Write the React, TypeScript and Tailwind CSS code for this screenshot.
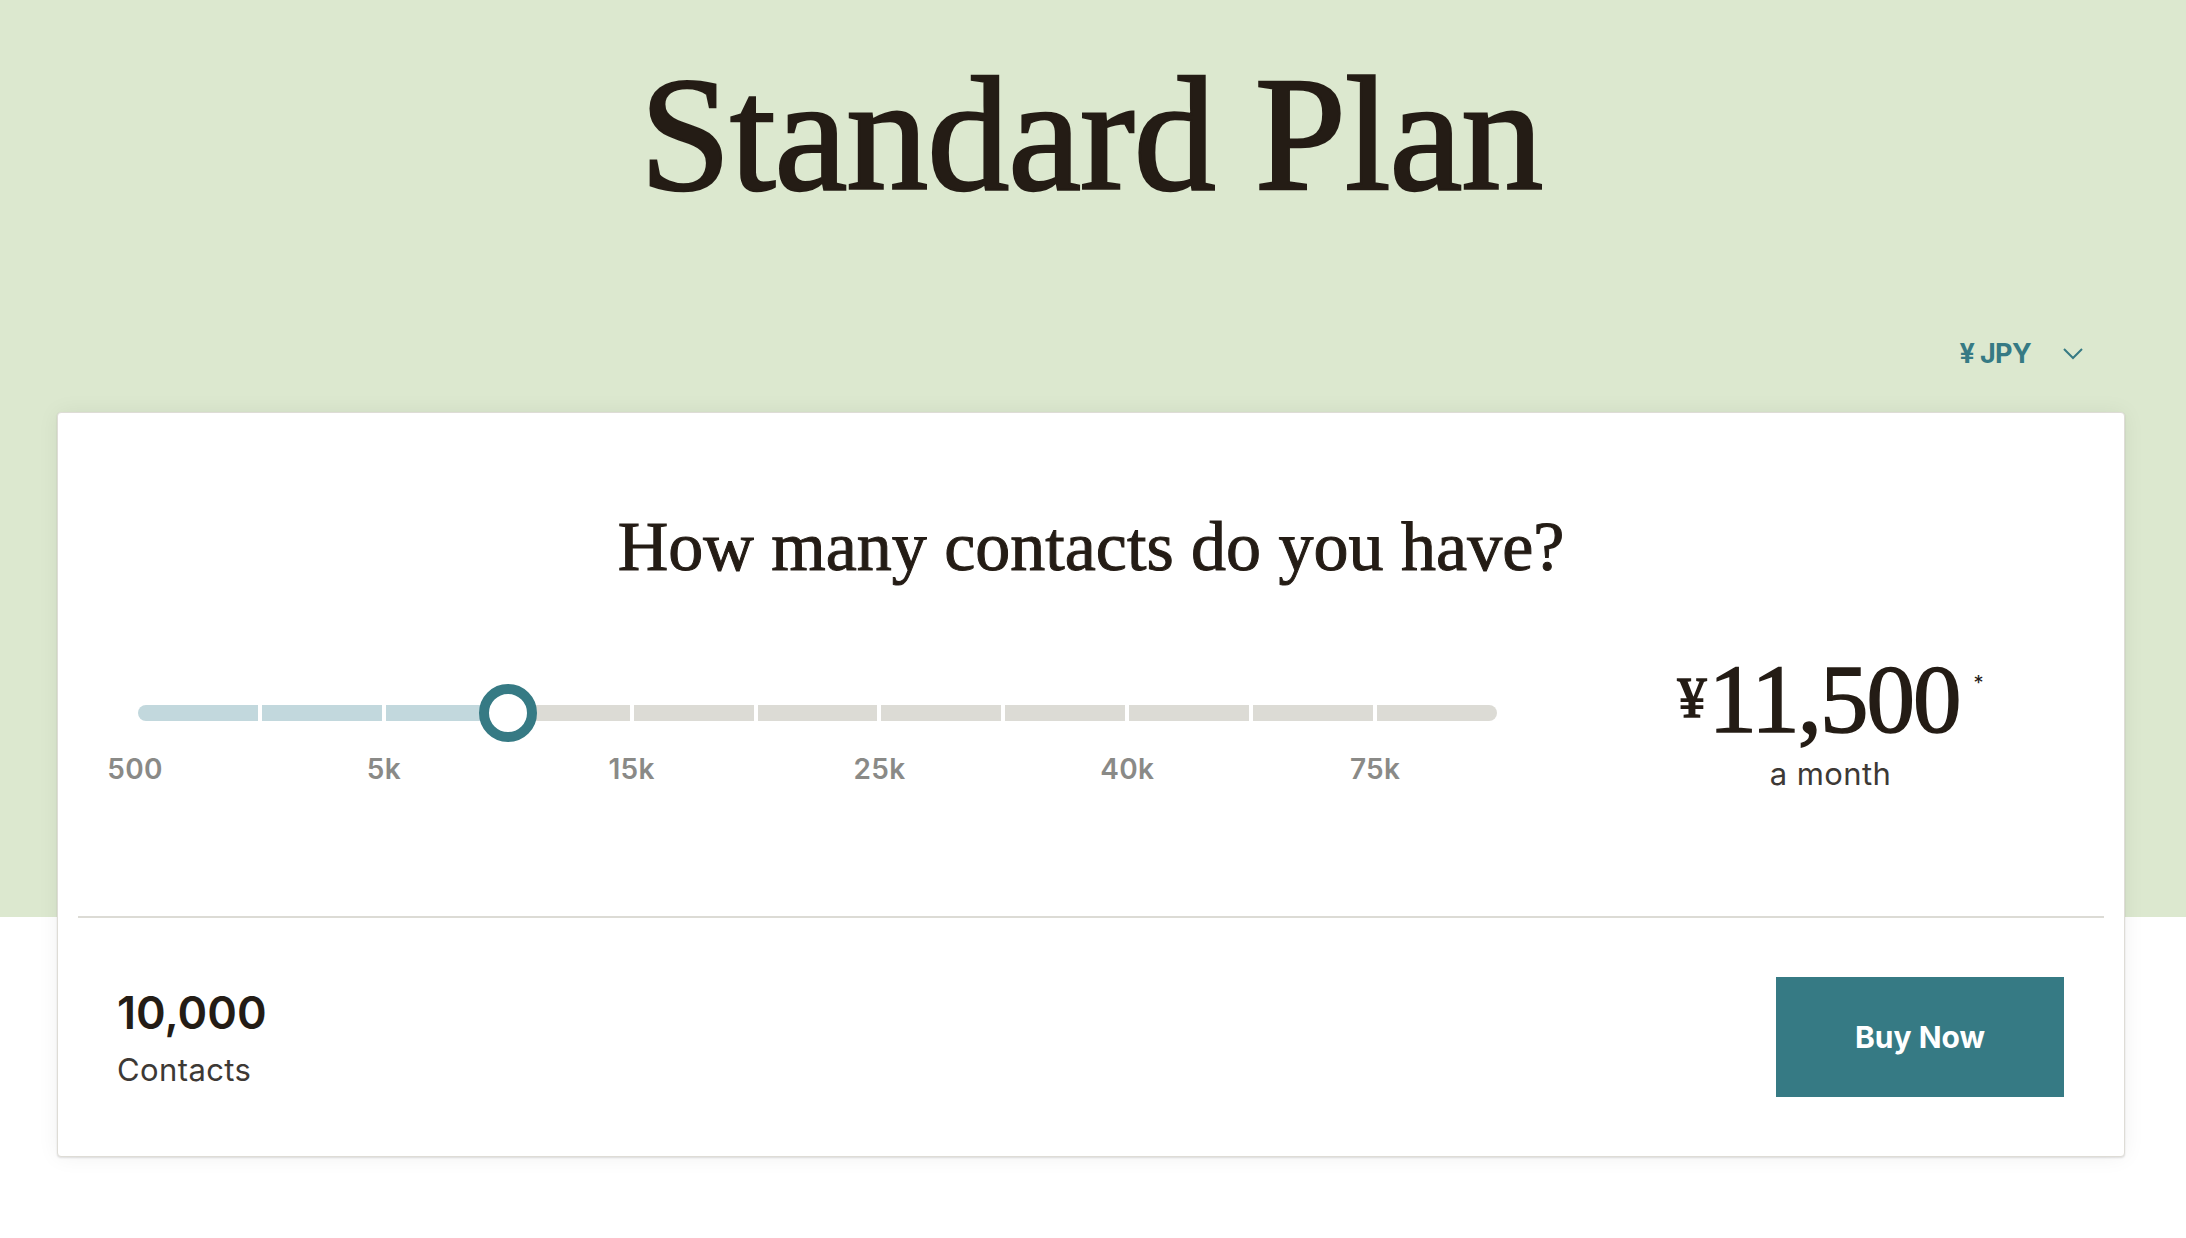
import React from 'react';

const serif = "font-['Liberation_Serif','Times_New_Roman',serif]";
const sans = "font-['Inter','Liberation_Sans',sans-serif]";

const SEGMENTS = 11;
const FILLED = 3;
const TRACK_W = 1359;
const GAP = 4;
const STEP = (TRACK_W + GAP) / SEGMENTS;

const ticks = [
  { label: '500', at: 0 },
  { label: '5k', at: 2 },
  { label: '15k', at: 4 },
  { label: '25k', at: 6 },
  { label: '40k', at: 8 },
  { label: '75k', at: 10 },
];

function ContactSlider() {
  return (
    <div className="relative ml-[80px] mt-[54px] w-[1359px] shrink-0">
      <div className="flex h-[16px] gap-[4px]">
        {Array.from({ length: SEGMENTS }).map((_, i) => (
          <div
            key={i}
            className={[
              'h-full flex-1',
              i < FILLED ? 'bg-[#c2d8dd]' : 'bg-[#dcdbd5]',
              i === 0 ? 'rounded-l-full' : '',
              i === SEGMENTS - 1 ? 'rounded-r-full' : '',
            ].join(' ')}
          />
        ))}
      </div>

      {/* knob */}
      <div
        className="absolute top-[-21px] h-[58px] w-[58px] -translate-x-1/2 rounded-full border-[10px] border-[#367a84] bg-white"
        style={{ left: FILLED * STEP - GAP / 2 }}
      />

      <div className="relative mt-[34px] h-[28px]">
        {ticks.map((t) => (
          <span
            key={t.label}
            className={`absolute top-0 -translate-x-1/2 text-[28px] leading-none font-semibold tracking-[0.3px] text-[#8a8a87] ${sans}`}
            style={{ left: t.at * STEP - (t.at === 0 ? 3 : GAP / 2) }}
          >
            {t.label}
          </span>
        ))}
      </div>
    </div>
  );
}

export default function App() {
  return (
    <div className="min-h-screen bg-[linear-gradient(to_bottom,#dce8cf_0,#dce8cf_917px,#ffffff_917px)]">
      <div className="pl-[57px] pr-[61px]">
        <h1
          className={`pt-[52px] text-center text-[164px] leading-none font-normal tracking-[-1px] text-[#241c15] [-webkit-text-stroke:2.5px_#241c15] ${serif}`}
        >
          Standard Plan
        </h1>

        <div className="mt-[124px] flex items-center justify-end pr-[42px]">
          <span className={`text-[27px] leading-none font-bold tracking-tight text-[#367a84] ${sans}`}>¥ JPY</span>
          <svg className="ml-[32px]" width="20" height="12" viewBox="0 0 20 12" fill="none">
            <polyline points="1,1 10,10 19,1" stroke="#367a84" strokeWidth="2" />
          </svg>
        </div>

        <div className="mt-[45px] rounded-[4px] border border-[#dedcd6] bg-white shadow-[0_1px_2px_rgba(0,0,0,0.12),0_0_22px_rgba(0,0,0,0.06)]">
          <div className="h-[503px] pt-[99px]">
            <h2
              className={`text-center text-[70px] leading-none font-normal text-[#241c15] [-webkit-text-stroke:1px_#241c15] ${serif}`}
            >
              How many contacts do you have?
            </h2>

            <div className="mt-[69px] flex items-start">
              <ContactSlider />

              <div className="ml-[40px] flex flex-1 flex-col items-center">
                <div className={`flex items-start text-[#241c15] [-webkit-text-stroke:1.5px_#241c15] ${serif}`}>
                  <span className="mr-[2px] mt-[18px] text-[58px] leading-none">¥</span>
                  <span className="text-[97px] leading-none tracking-[-2px]">11,500</span>
                  <span className={`ml-[14px] mt-[22px] text-[20px] leading-none [-webkit-text-stroke:0] ${sans}`}>*</span>
                </div>
                <span className={`mt-[10px] text-[31px] leading-none tracking-[0.4px] text-[#3d3935] ${sans}`}>
                  a month
                </span>
              </div>
            </div>
          </div>

          <div className="mx-[20px] h-[2px] bg-[#dcdbd5]" />

          <div className="flex h-[238px] items-center justify-between pl-[59px] pr-[60px]">
            <div className={`flex flex-col ${sans}`}>
              <span className="text-[45px] leading-none font-semibold text-[#241c15]">10,000</span>
              <span className="mt-[19px] text-[31px] leading-none tracking-[0.4px] text-[#3d3935]">Contacts</span>
            </div>
            <button
              className={`flex h-[120px] w-[288px] items-center justify-center bg-[#367a84] text-[30px] font-bold text-white ${sans}`}
            >
              Buy Now
            </button>
          </div>
        </div>
      </div>
    </div>
  );
}
